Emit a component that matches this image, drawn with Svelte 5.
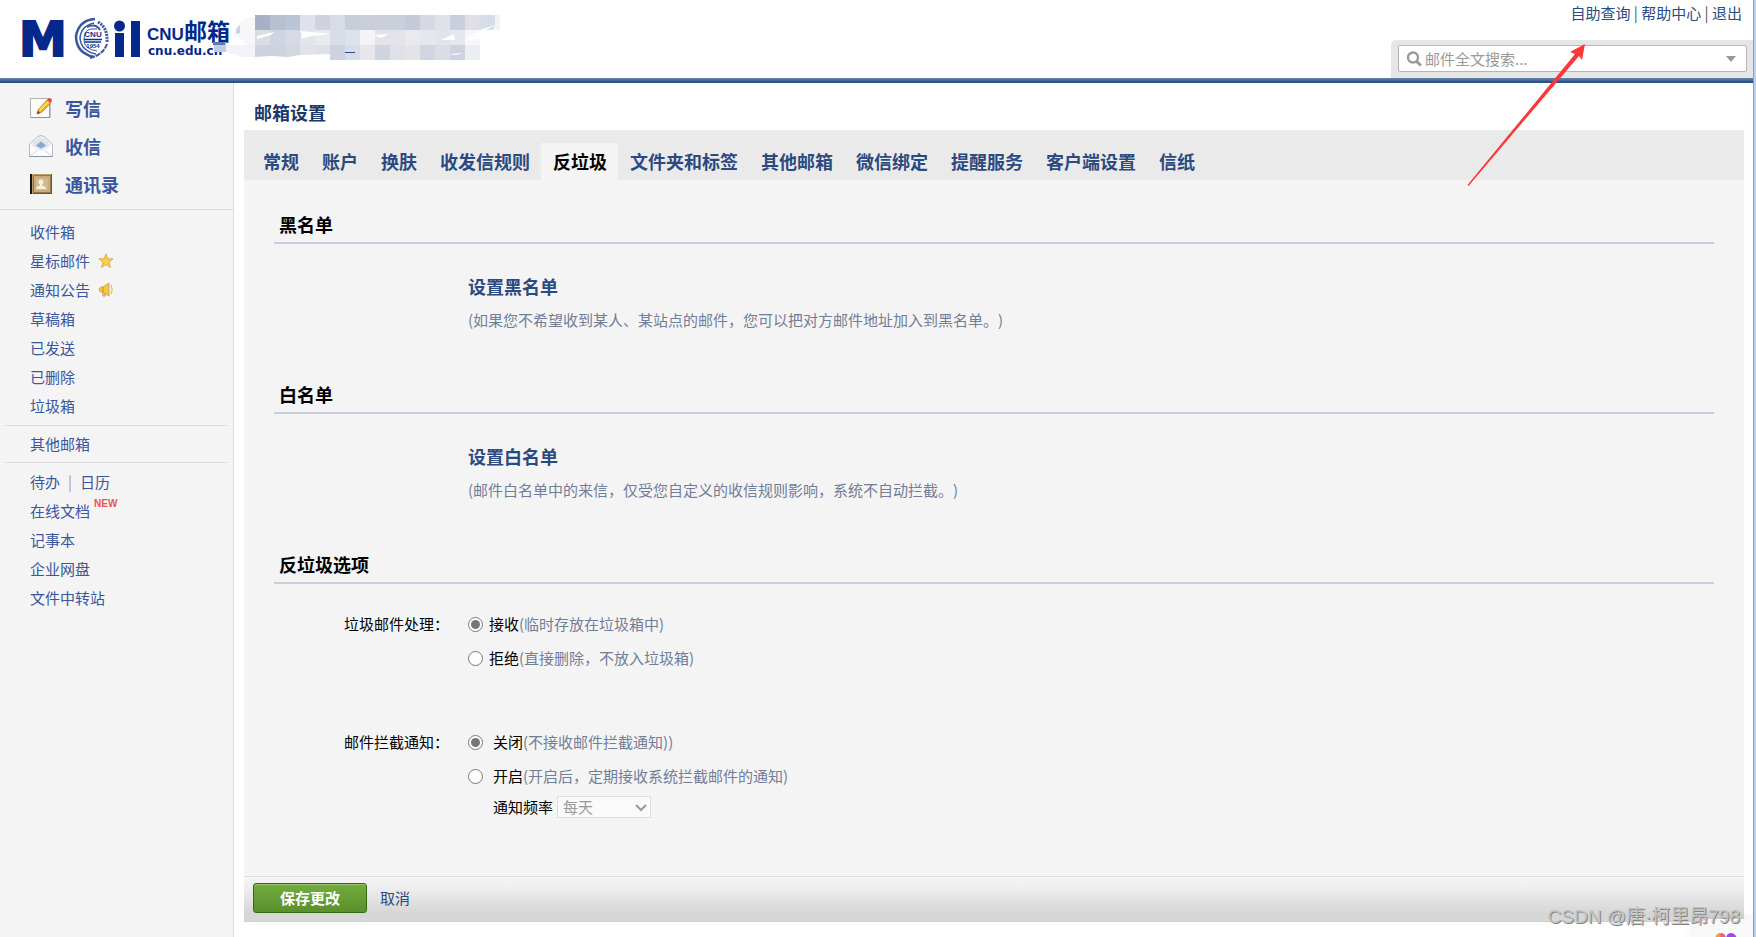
<script lang="ts">
  const folders = [
    { name: '收件箱' },
    { name: '星标邮件', icon: 'star' },
    { name: '通知公告', icon: 'horn' },
    { name: '草稿箱' },
    { name: '已发送' },
    { name: '已删除' },
    { name: '垃圾箱' },
  ];

  const tabs = ['常规', '账户', '换肤', '收发信规则', '反垃圾', '文件夹和标签', '其他邮箱', '微信绑定', '提醒服务', '客户端设置', '信纸'];
  let activeTab = $state('反垃圾');

  let keyword = $state('');
  let spamAction = $state('accept');
  let notify = $state('off');

  // Blocks that mask the school name next to the logo, one array per row.
  const mosaic = [
    ['#a6b1c7', '#b8bfce', '#bac4d5', '#dfe2ec', '#d0d2dd', '#d7dce7', '#c9cdd9', '#c9ced9', '#cacfda', '#c8d0dc', '#c4cad8', '#d6d8e3', '#e0e2ea', '#c8d0de', '#e1dfe5', '#d6dde6', '#f2f3f5'],
    ['#dadde4', '#cfd5e0', '#d6dae4', '#e3e5ed', '#e8eaf0', '#d8dde8', '#dde1eb', '#f4f4f7', '#e2e4ea', '#e3e3e9', '#eaeaee', '#e5e7ef', '#e0e4ec', '#e5e6ee', '#f6f6f9'],
    ['#cdd4df', '#cdd4de', '#d3d7e0', '#e3e2e8', '#dfdfe7', '#cdd2de', '#d7dce6', '#e6e6ec', '#d0d4df', '#dfe0e8', '#e3e3ea', '#d0d5e1', '#dbdde6', '#cdd2de', '#ebeff4'],
  ];
</script>

<div class="page">
  <header>
    <svg class="logo" width="500" height="78" viewBox="0 0 500 78" role="img" aria-label="CNU邮箱">
      <g fill="#05298a" font-weight="bold">
        <text class="mark" x="19" y="56">M</text>
        <circle cx="119.500" cy="26" r="5.500" />
        <rect x="115" y="33" width="9" height="24" />
        <rect x="131" y="21" width="9" height="36" />
        <text class="brand-latin" x="147" y="40">CNU</text>
        <text class="brand-cn" x="184" y="40">邮箱</text>
        <text class="domain" x="148" y="55">cnu.edu.cn</text>
      </g>
      <g fill="none" stroke="#3a569f">
        <path d="M95 19Q79 20 76 36Q76 53 94 57" stroke-width="2.500" />
        <path d="M94 23Q81 26 80 38Q81 51 96 54" stroke-width="1.500" />
        <path d="M97 29Q83 27 84 40Q84 49 97 51" stroke-width="1" />
        <path d="M87 27Q96 23 100 30" stroke-width="2" />
        <path d="M98 22Q108 28 107 42" stroke-width="3" stroke-dasharray="2 1" />
        <path d="M107 44Q103 55 90 58" stroke-width="2" stroke-dasharray="5 1" />
        <path d="M84 39.500h18M85 42h16" stroke="#12328c" stroke-width="1.500" />
      </g>
      <g fill="#12328c" font-weight="bold" text-anchor="middle">
        <text class="seal" x="93" y="37">CNU</text>
        <text class="seal-year" x="93" y="48">1954</text>
      </g>
      <path d="M255 17q-14 1-18 10q-3 10 6 14l12 16z" fill="#f7f6f9" />
      <path d="M240 25q-5 3-4 9l4-1z" fill="#c9d2e8" />
      <path d="M214 42h12v3h14v7h-26z" fill="#c0cce6" />
      <rect x="213" y="42" width="12" height="3" fill="#5c79b7" />
      <path d="M226 45h30v12h-14l-16-5z" fill="#f2f3f9" />
      {#each mosaic as row, r}
        {#each row as color, c}
          <rect x={255 + c * 15} y={15 + r * 15} width="15" height="15" fill={color} />
        {/each}
      {/each}
      <path d="M257 36l17-4-3 3-14 4zM301 31l30 3-20 2-9 3zM373 35l16-1-8 4zM441 40l13-6 1 6zM449 54l15-1-8 2zM480 30l15-5-2 6-10 7-20 3zM495 15v10l-9 5h9zM480 45h14v15h-14zM255 57l16-1 17 1 12-2 30-1v6h-75z" fill="#fff" />
      <rect x="345" y="52" width="10" height="1" fill="#234a8b" />
    </svg>

    <div class="header-right">
      <nav class="top-links" aria-label="账户">
        <a href="#query">自助查询</a> | <a href="#help">帮助中心</a> | <a href="#logout">退出</a>
      </nav>
      <form class="search" role="search" onsubmit={(e) => e.preventDefault()}>
        <div class="search-box">
          <svg width="16" height="16" viewBox="0 0 16 16" fill="none" stroke="#999" aria-hidden="true">
            <circle cx="7" cy="6.500" r="5" stroke-width="2.400" />
            <path d="M10.500 10.500L15 14.500" stroke-width="3" />
          </svg>
          <input type="text" placeholder="邮件全文搜索..." aria-label="邮件全文搜索" bind:value={keyword} />
          <button type="button" aria-label="搜索选项">
            <svg width="10" height="6" viewBox="0 0 10 6"><path d="M0 0h10L5 6z" fill="#999" /></svg>
          </button>
        </div>
      </form>
    </div>
  </header>

  <div class="body">
    <aside>
      <nav class="primary" aria-label="邮件">
        <a href="#compose">
          <svg width="24" height="24" viewBox="0 0 24 24" aria-hidden="true">
            <rect x="1.500" y="2.500" width="19" height="19" fill="#fdfdfd" stroke="#b0b0ac" />
            <path d="M2 21.500h19V4" fill="none" stroke="#929292" />
            <path d="M9 14l9-10 4 3-9 9-5 2z" fill="#f1b62a" stroke="#b87d1c" stroke-width=".8" />
            <path d="M11 14l9-9" stroke="#ffe27a" stroke-width="1.500" />
            <path d="M18 4l2-2q3 0 3 3l-2 2z" fill="#dd4d48" />
            <path d="M8 18l1-3 2 2z" fill="#5b3b20" />
          </svg>
          写信
        </a>
        <a href="#receive">
          <svg width="24" height="24" viewBox="0 0 24 24" aria-hidden="true">
            <path d="M.5 10L9 2.500q3-2 6 0L23.500 10v12.500H.5z" fill="#f4f6f8" stroke="#b4bbc2" />
            <path d="M4 12V8l8-5 8 5v4l-8 5z" fill="#dfe5ec" />
            <path d="M7 11.500l5-4 5 4-5 3z" fill="#86a6d4" />
            <path d="M1 12l11 5 11-5v10H1z" fill="#fbfcfd" />
            <path d="M1 22l8-6M23 22l-8-6" stroke="#d5dbe2" fill="none" />
            <path d="M.5 22.500h23" stroke="#8d98a3" />
          </svg>
          收信
        </a>
        <a href="#contacts">
          <svg width="24" height="24" viewBox="0 0 24 24" aria-hidden="true">
            <rect x="1" y="2" width="22" height="20" fill="#bd9c6b" />
            <rect x="4.500" y="3.500" width="17" height="17" fill="#c9aa79" stroke="#94764c" />
            <path d="M1 2h2v20H1z" fill="#171411" />
            <path d="M4 21.500h18.500V2" stroke="#6d5434" fill="none" />
            <rect x="7" y="6" width="12" height="12" fill="#d3b88c" />
            <circle cx="12" cy="10" r="2.500" fill="#f6efe0" />
            <path d="M7 17q0-3 4-3.500v-2h2v2q4 .5 4 3.500z" fill="#f6efe0" />
          </svg>
          通讯录
        </a>
      </nav>

      <ul class="list">
        {#each folders as folder}
          <li>
            <a href="#folder">{folder.name}</a>
            {#if folder.icon === 'star'}
              <svg width="16" height="16" viewBox="0 0 16 16" aria-hidden="true">
                <path d="M8 .8l1.900 5h5.200L11 9.200l1.500 5.400L8 11.500l-4.500 3.100L5 9.200.9 5.800h5.200z" fill="#f8cf4c" stroke="#d3a443" stroke-width=".8" />
              </svg>
            {:else if folder.icon === 'horn'}
              <svg width="16" height="16" viewBox="0 0 16 16" aria-hidden="true">
                <path d="M1.500 6Q3 4.500 5 5l6-4v13l-6-4q-2 .5-3.500-1z" fill="#f4c844" stroke="#d09a38" stroke-width=".8" />
                <path d="M5 5v9h2v-3" fill="none" stroke="#c78c32" />
                <path d="M13 3q2.500 4.500 0 9" fill="none" stroke="#e2b35a" />
              </svg>
            {/if}
          </li>
        {/each}
      </ul>

      <ul class="list other">
        <li><a href="#other">其他邮箱</a></li>
      </ul>

      <ul class="list tools">
        <li><a href="#todo">待办</a><span class="bar">|</span><a href="#calendar">日历</a></li>
        <li><a href="#docs">在线文档</a><span class="new">NEW</span></li>
        <li><a href="#notes">记事本</a></li>
        <li><a href="#disk">企业网盘</a></li>
        <li><a href="#transfer">文件中转站</a></li>
      </ul>
    </aside>

    <main>
      <h1>邮箱设置</h1>
      <div class="tabs" role="tablist">
        {#each tabs as tab}
          <button role="tab" aria-selected={tab === activeTab} class:active={tab === activeTab} onclick={() => (activeTab = tab)}>
            {tab}
          </button>
        {/each}
      </div>

      <div class="panel">
        <section>
          <h2>黑名单</h2>
          <div class="entry">
            <a href="#blacklist">设置黑名单</a>
            <p>(如果您不希望收到某人、某站点的邮件，您可以把对方邮件地址加入到黑名单。)</p>
          </div>
        </section>

        <section>
          <h2>白名单</h2>
          <div class="entry">
            <a href="#whitelist">设置白名单</a>
            <p>(邮件白名单中的来信，仅受您自定义的收信规则影响，系统不自动拦截。)</p>
          </div>
        </section>

        <section>
          <h2>反垃圾选项</h2>
          <div class="fields">
            <div class="field" role="radiogroup" aria-labelledby="spam-label">
              <span class="field-label" id="spam-label">垃圾邮件处理：</span>
              <div class="options">
                <label><input type="radio" value="accept" bind:group={spamAction} />接收<small>(临时存放在垃圾箱中)</small></label>
                <label><input type="radio" value="reject" bind:group={spamAction} />拒绝<small>(直接删除，不放入垃圾箱)</small></label>
              </div>
            </div>
            <div class="field wide" role="radiogroup" aria-labelledby="notify-label">
              <span class="field-label" id="notify-label">邮件拦截通知：</span>
              <div class="options">
                <label><input type="radio" value="off" bind:group={notify} />关闭<small>(不接收邮件拦截通知))</small></label>
                <label><input type="radio" value="on" bind:group={notify} />开启<small>(开启后，定期接收系统拦截邮件的通知)</small></label>
                <div class="frequency">
                  <label for="frequency">通知频率</label>
                  <div class="select">
                    <select id="frequency" disabled={notify === 'off'}>
                      <option>每天</option>
                    </select>
                    <svg width="12" height="8" viewBox="0 0 12 8" aria-hidden="true">
                      <path d="M1 1l5 5 5-5" fill="none" stroke="#999" stroke-width="2" />
                    </svg>
                  </div>
                </div>
              </div>
            </div>
          </div>
        </section>
      </div>

      <div class="actions">
        <button class="save">保存更改</button>
        <a href="#cancel">取消</a>
      </div>
    </main>
  </div>

  <svg class="arrow" width="120" height="144" viewBox="0 0 120 144" aria-hidden="true">
    <path d="M.5 142L108 11l-5-2L118 1l-3 16-3-4L1.500 143z" fill="#fb3737" />
  </svg>

  <div class="assistant">
    <svg width="26" height="20" viewBox="0 0 26 20" aria-hidden="true">
      <path d="M1 12Q2 1 8 1q4 0 5 5v14H1z" fill="#f0568f" />
      <path d="M1 12Q2 1 8 1L4 20H1z" fill="#f79a3c" />
      <path d="M13 20V6q1-5 5-5 6 0 7 11v8z" fill="#a348e8" />
    </svg>
  </div>
  <div class="watermark">CSDN @唐·柯里昂798</div>
</div>

<style>
  :global(body) {
    margin: 0;
    background: #fff;
  }

  .page {
    position: relative;
    box-sizing: border-box;
    min-height: 100vh;
    display: flex;
    flex-direction: column;
    overflow: hidden;
    border-right: 2px solid #b9d4f1;
    box-shadow: inset -1px 0 #83a3ca;
    font: 15px/28px "Noto Sans CJK SC", sans-serif;
    text-spacing-trim: space-all;
    color: #000;
  }

  a {
    color: #2a4a80;
    text-decoration: none;
  }
  button,
  input,
  select {
    font: inherit;
  }
  h1,
  h2,
  p,
  ul {
    margin: 0;
    padding: 0;
  }

  header {
    display: flex;
    justify-content: space-between;
    height: 78px;
    margin-right: 1px;
    padding-bottom: 5px;
    background: linear-gradient(#6b82a4, #48699a 50%, #265689 60%) bottom / 100% 5px no-repeat;
  }
  .logo {
    flex: none;
  }
  .mark {
    font-family: "DejaVu Sans", sans-serif;
    font-size: 48px;
    stroke: #05298a;
    stroke-width: 2px;
  }
  .brand-latin {
    font-family: "Liberation Sans", sans-serif;
    font-size: 17px;
  }
  .brand-cn {
    font-size: 23px;
  }
  .domain {
    font-family: "DejaVu Sans", sans-serif;
    font-size: 12px;
  }
  .seal {
    font-family: "Liberation Sans", sans-serif;
    font-size: 8px;
  }
  .seal-year {
    font-family: "Liberation Sans", sans-serif;
    font-size: 6px;
  }

  .header-right {
    display: flex;
    flex-direction: column;
    justify-content: space-between;
    align-items: flex-end;
  }
  .top-links {
    padding-right: 11px;
    line-height: 26px;
    color: #555;
  }
  .search {
    box-sizing: border-box;
    width: 362px;
    padding: 5px 6px 6px 7px;
    background: #e6e6e6;
    border-radius: 5px 0 0 0;
  }
  .search-box {
    display: flex;
    align-items: center;
    gap: 3px;
    height: 25px;
    padding-left: 7px;
    background: #fff;
    border: 1px solid #b5b5b5;
    border-radius: 2px;
  }
  .search-box input {
    flex: 1;
    min-width: 0;
    padding: 0;
    line-height: 24px;
    border: 0;
    outline: 0;
    background: none;
  }
  .search-box input::placeholder {
    color: #999;
  }
  .search-box button {
    display: flex;
    padding: 8px 10px;
    border: 0;
    background: none;
  }

  .body {
    flex: 1;
    display: flex;
  }

  aside {
    flex: none;
    width: 233px;
    background: #f4f4f4;
    border-right: 1px solid #ddd;
  }
  aside a {
    color: #3a569c;
  }
  .primary {
    display: flex;
    flex-direction: column;
    padding: 6px 0 6px 29px;
    border-bottom: 1px solid #ddd;
  }
  .primary a {
    display: flex;
    align-items: center;
    gap: 12px;
    font-size: 18px;
    font-weight: bold;
    line-height: 38px;
  }
  .list {
    list-style: none;
    margin: 0 6px 0 5px;
    padding: 7px 0 5px 25px;
    line-height: 29px;
  }
  .list li {
    display: flex;
    align-items: center;
    gap: 8px;
  }
  .list.other {
    padding-top: 3px;
    padding-bottom: 4px;
    border: solid #ddd;
    border-width: 1px 0;
  }
  .list.tools {
    padding-top: 4px;
  }
  .bar {
    color: #a99c90;
  }
  .tools .new {
    align-self: flex-start;
    margin-left: -4px;
    font: bold 10px/16px "Liberation Sans", sans-serif;
    color: #e8544f;
  }

  main {
    flex: 1;
    min-width: 0;
    padding: 0 10px 12px;
  }
  h1 {
    padding: 15px 10px 4px;
    font-size: 18px;
    line-height: 28px;
    color: #1b3867;
  }
  .tabs {
    display: flex;
    flex-wrap: wrap;
    padding: 13px 7px 0;
    background: #eaeaea;
  }
  .tabs button {
    padding: 0 11px 0 12px;
    border: 0;
    background: none;
    font-size: 18px;
    font-weight: bold;
    line-height: 37px;
    color: #2a4a80;
  }
  .tabs .active {
    background: #f4f4f4;
    color: #000;
  }

  .panel {
    padding: 31px 30px 9px;
    background: #f4f4f4;
  }
  h2 {
    padding: 0 5px 5px;
    border-bottom: 2px solid #c8cfde;
    font-size: 18px;
    line-height: 26px;
  }
  .entry {
    padding: 29px 0 47px 194px;
  }
  .entry a {
    display: table;
    font-size: 18px;
    font-weight: bold;
    line-height: 26px;
  }
  .entry p {
    margin-top: 7px;
    color: #727d98;
  }

  .fields {
    display: flex;
    flex-direction: column;
    gap: 50px;
    padding: 23px 0 46px;
    line-height: 34px;
  }
  .field {
    display: grid;
    grid-template-columns: 175px 1fr;
    gap: 19px;
  }
  .field-label {
    text-align: right;
  }
  .options > label {
    display: flex;
    align-items: center;
  }
  .options input {
    width: 15px;
    height: 15px;
    margin: 0 6px 0 0;
    accent-color: #767676;
  }
  .wide .options input {
    margin-right: 10px;
  }
  small {
    font-size: 15px;
    color: #727d98;
  }
  .frequency {
    display: flex;
    align-items: center;
    gap: 4px;
    padding-left: 25px;
    line-height: 28px;
  }
  .select {
    position: relative;
    display: flex;
  }
  .select svg {
    position: absolute;
    right: 4px;
    top: 8px;
    pointer-events: none;
  }
  select {
    appearance: none;
    width: 94px;
    height: 22px;
    padding: 0 20px 0 5px;
    border: 1px solid #ddd;
    border-radius: 0;
    background: #fafafa;
    line-height: 20px;
    color: #000;
  }
  select:disabled {
    color: #999;
    opacity: 1;
  }

  .actions {
    display: flex;
    align-items: center;
    gap: 13px;
    height: 42px;
    padding: 0 9px 2px;
    border-top: 1px solid #ddd;
    border-bottom: 1px solid #c8cfde;
    background: linear-gradient(#f4f4f4, #f0f0f0 20%, #d5d5d5 85%, #d8d8d8);
  }
  .save {
    width: 114px;
    height: 30px;
    padding: 0;
    border: 1px solid #2f6c0e;
    border-radius: 3px;
    background: linear-gradient(#74ac3e, #5a8f2c);
    box-shadow: inset 0 1px #9bc472;
    font-weight: bold;
    line-height: 26px;
    color: #fff;
  }

  .arrow {
    position: absolute;
    top: 43px;
    right: 167px;
    pointer-events: none;
  }
  .assistant {
    position: absolute;
    right: 1px;
    bottom: 0;
    display: flex;
    justify-content: flex-end;
    align-items: flex-start;
    box-sizing: border-box;
    width: 60px;
    height: 18px;
    padding: 13px 14px 0 0;
    overflow: hidden;
    background: #f9f9fa;
    border-radius: 30px 0 0 0;
    box-shadow: 0 0 12px rgba(0, 0, 0, 0.12);
  }
  .assistant svg {
    flex: none;
  }
  .watermark {
    position: absolute;
    right: 14px;
    bottom: 6px;
    font-family: "Liberation Sans", "Noto Sans CJK SC", sans-serif;
    font-size: 19px;
    color: #c4c4c4;
    text-shadow: 1px 1px #858585;
    pointer-events: none;
  }
</style>
